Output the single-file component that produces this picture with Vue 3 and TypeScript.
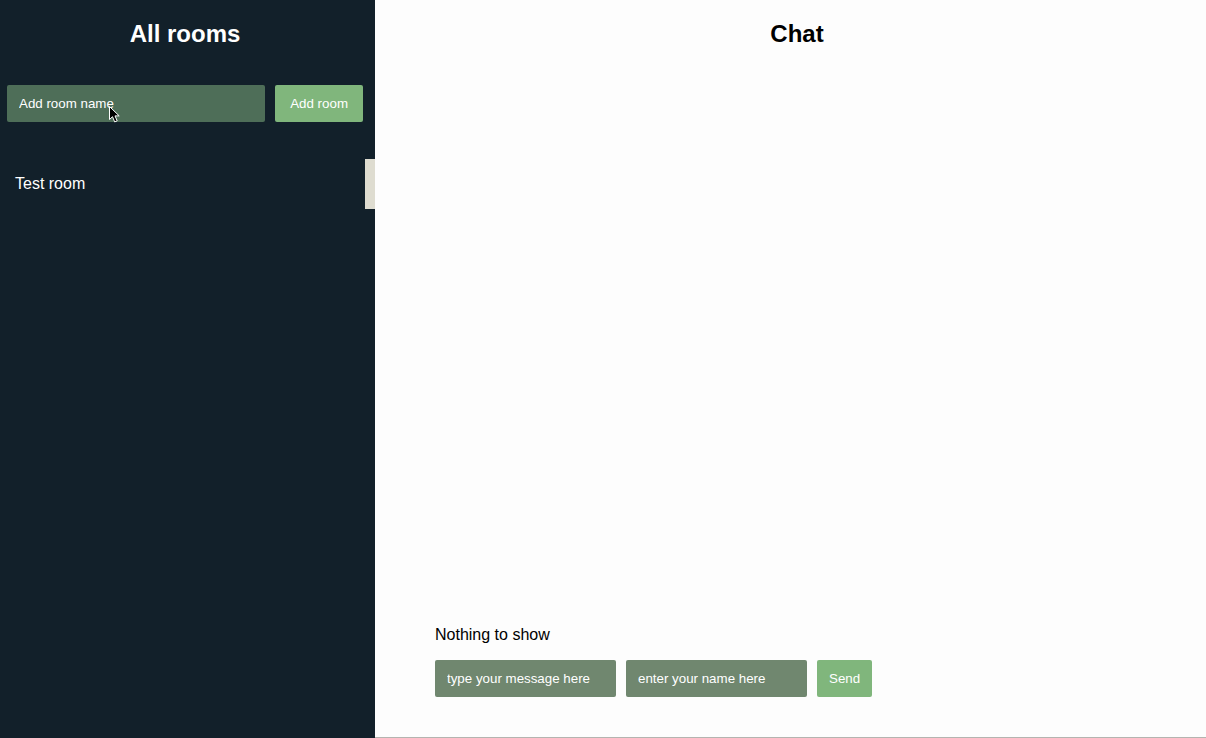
<script setup lang="ts">
import { ref } from 'vue'

const rooms = ref<string[]>(['Test room'])
const activeRoom = ref('Test room')
const roomName = ref('')
const message = ref('')
const author = ref('')

function addRoom() {
  const name = roomName.value.trim()
  if (name) rooms.value.push(name)
  roomName.value = ''
}
</script>

<template>
  <div class="app">
    <aside class="sidebar">
      <header class="sidebar-head">
        <h2>All rooms</h2>
        <form class="room-form" @submit.prevent="addRoom">
          <input v-model="roomName" class="field" type="text" placeholder="Add room name" aria-label="Add room name" />
          <button class="btn btn-wide" type="submit">Add room</button>
        </form>
      </header>
      <nav class="rooms">
        <button
          v-for="room in rooms"
          :key="room"
          type="button"
          class="room"
          :class="{ active: room === activeRoom }"
          @click="activeRoom = room"
        >
          {{ room }}
        </button>
      </nav>
      <svg class="pointer" viewBox="0 0 12 18" width="12" height="18" aria-hidden="true">
        <path d="M1.500 1.500v13l3-2.800 2.200 5.200 2.500-1-2.200-5h4.200z" fill="#000" stroke="#fff" stroke-width="1" />
      </svg>
    </aside>
    <main class="chat">
      <h2>Chat</h2>
      <section class="conversation">
        <p>Nothing to show</p>
        <form class="message-form" @submit.prevent>
          <input v-model="message" class="field" type="text" placeholder="type your message here" aria-label="Message" />
          <input v-model="author" class="field" type="text" placeholder="enter your name here" aria-label="Name" />
          <button class="btn" type="submit">Send</button>
        </form>
      </section>
    </main>
  </div>
</template>

<style>
body {
  margin: 0;
}
</style>

<style scoped>
.app {
  display: flex;
  min-height: 100vh;
  box-sizing: border-box;
  border-bottom: 1px solid #b4b4b0;
  background: #fdfdfd;
  color: #000;
  font-family: "Liberation Sans", Arial, Helvetica, sans-serif;
  font-size: 16px;
}

h2 {
  margin: 20px 0 0;
  font-size: 24px;
  line-height: 28px;
  text-align: center;
}

.sidebar {
  position: relative;
  flex: 0 0 375px;
  margin-bottom: -1px;
  background-color: #12202a;
  color: #fff;
}

.sidebar-head {
  padding: 0 12px 0 7px;
}

.room-form {
  display: flex;
  gap: 10px;
  margin-top: 37px;
}

.room-form .field {
  flex: 1;
  min-width: 0;
}

.field,
.btn {
  box-sizing: border-box;
  height: 37px;
  border: 0;
  border-radius: 2px;
  padding: 0 12px;
  color: #fff;
  font-family: inherit;
}

.field {
  background: #4e6e58;
}

.field::placeholder {
  color: #fff;
  opacity: 1;
}

.btn {
  background: #80b67c;
  cursor: pointer;
}

.btn-wide {
  padding: 0 15px;
}

.rooms {
  margin-top: 37px;
}

.room {
  display: block;
  box-sizing: border-box;
  width: 100%;
  height: 50px;
  border: 0;
  padding: 0 15px;
  background: transparent;
  color: #fff;
  font: inherit;
  text-align: left;
  cursor: pointer;
}

.room.active {
  border-right: 10px solid #dedcd0;
}

.pointer {
  position: absolute;
  left: 108px;
  top: 105px;
  pointer-events: none;
}

.chat {
  display: flex;
  flex: 1;
  flex-direction: column;
  padding: 0 47px 40px 60px;
}

.conversation {
  margin-top: auto;
}

.conversation p {
  margin: 0 0 16px;
  line-height: 18px;
}

.message-form {
  display: flex;
  gap: 10px;
}

.message-form .field {
  width: 181px;
  background: #70876f;
}
</style>
